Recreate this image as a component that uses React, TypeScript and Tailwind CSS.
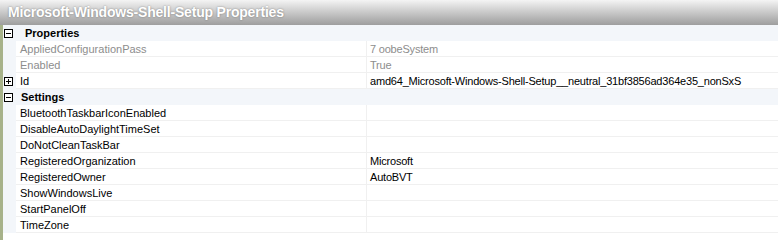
type Row = {
  label: string;
  value?: string;
  muted?: boolean;
  expandable?: boolean;
};

type Category = {
  name: string;
  rows: Row[];
};

const categories: Category[] = [
  {
    name: "Properties",
    rows: [
      { label: "AppliedConfigurationPass", value: "7 oobeSystem", muted: true },
      { label: "Enabled", value: "True", muted: true },
      { label: "Id", value: "amd64_Microsoft-Windows-Shell-Setup__neutral_31bf3856ad364e35_nonSxS", expandable: true },
    ],
  },
  {
    name: "Settings",
    rows: [
      { label: "BluetoothTaskbarIconEnabled" },
      { label: "DisableAutoDaylightTimeSet" },
      { label: "DoNotCleanTaskBar" },
      { label: "RegisteredOrganization", value: "Microsoft" },
      { label: "RegisteredOwner", value: "AutoBVT" },
      { label: "ShowWindowsLive" },
      { label: "StartPanelOff" },
      { label: "TimeZone" },
    ],
  },
];

function Toggle({ open }: { open: boolean }) {
  return (
    <span className="relative block h-[9px] w-[9px] border border-black bg-white">
      <span className="absolute left-[1px] top-[3px] h-px w-[5px] bg-black" />
      {!open ? <span className="absolute left-[3px] top-[1px] h-[5px] w-px bg-black" /> : null}
    </span>
  );
}

export default function App() {
  return (
    <div className="h-[240px] w-[778px] overflow-hidden bg-white font-['Liberation_Sans',Arial,sans-serif] text-[11px] text-black">
      <div className="flex h-[25px] items-center bg-gradient-to-b from-[#f4f4f4] to-[#9e9e9e] pl-2">
        <span className="text-[14px] font-bold tracking-[-0.2px] text-white [text-shadow:0_0_2px_rgba(0,0,0,0.4)]">
          Microsoft-Windows-Shell-Setup Properties
        </span>
      </div>
      <div className="flex">
        <div className="h-[215px] w-[3px] shrink-0 bg-[#a7b28a]" />
        <div className="flex-1 bg-[#f3f6fa]">
          {categories.map((cat) => (
            <div key={cat.name}>
              <div className="flex h-[16px] items-center">
                <span className="ml-[1px] flex w-[13px] justify-start">
                  <Toggle open />
                </span>
                <span className={`pt-px font-bold ${cat.name === "Properties" ? "pl-[8px]" : "pl-[4px]"}`}>{cat.name}</span>
              </div>
              {cat.rows.map((row) => (
                <div key={row.label} className="flex h-[16px]">
                  <span className="flex w-[13px] shrink-0 items-center pl-[1px]">
                    {row.expandable ? <Toggle open={false} /> : null}
                  </span>
                  <div className="flex flex-1 border-b border-[#f0f0f0] bg-white">
                    <span className={`w-[350px] shrink-0 truncate pl-[4px] pt-px leading-[15px] ${row.muted ? "text-[#8d8d8d]" : ""}`}>
                      {row.label}
                    </span>
                    <span className={`flex-1 truncate border-l border-[#f0f0f0] pl-[3px] pt-px leading-[15px] tracking-[-0.2px] ${row.muted ? "text-[#8d8d8d]" : ""}`}>
                      {row.value ?? ""}
                    </span>
                  </div>
                </div>
              ))}
            </div>
          ))}
          <div className="h-[7px] bg-white" />
        </div>
      </div>
    </div>
  );
}
